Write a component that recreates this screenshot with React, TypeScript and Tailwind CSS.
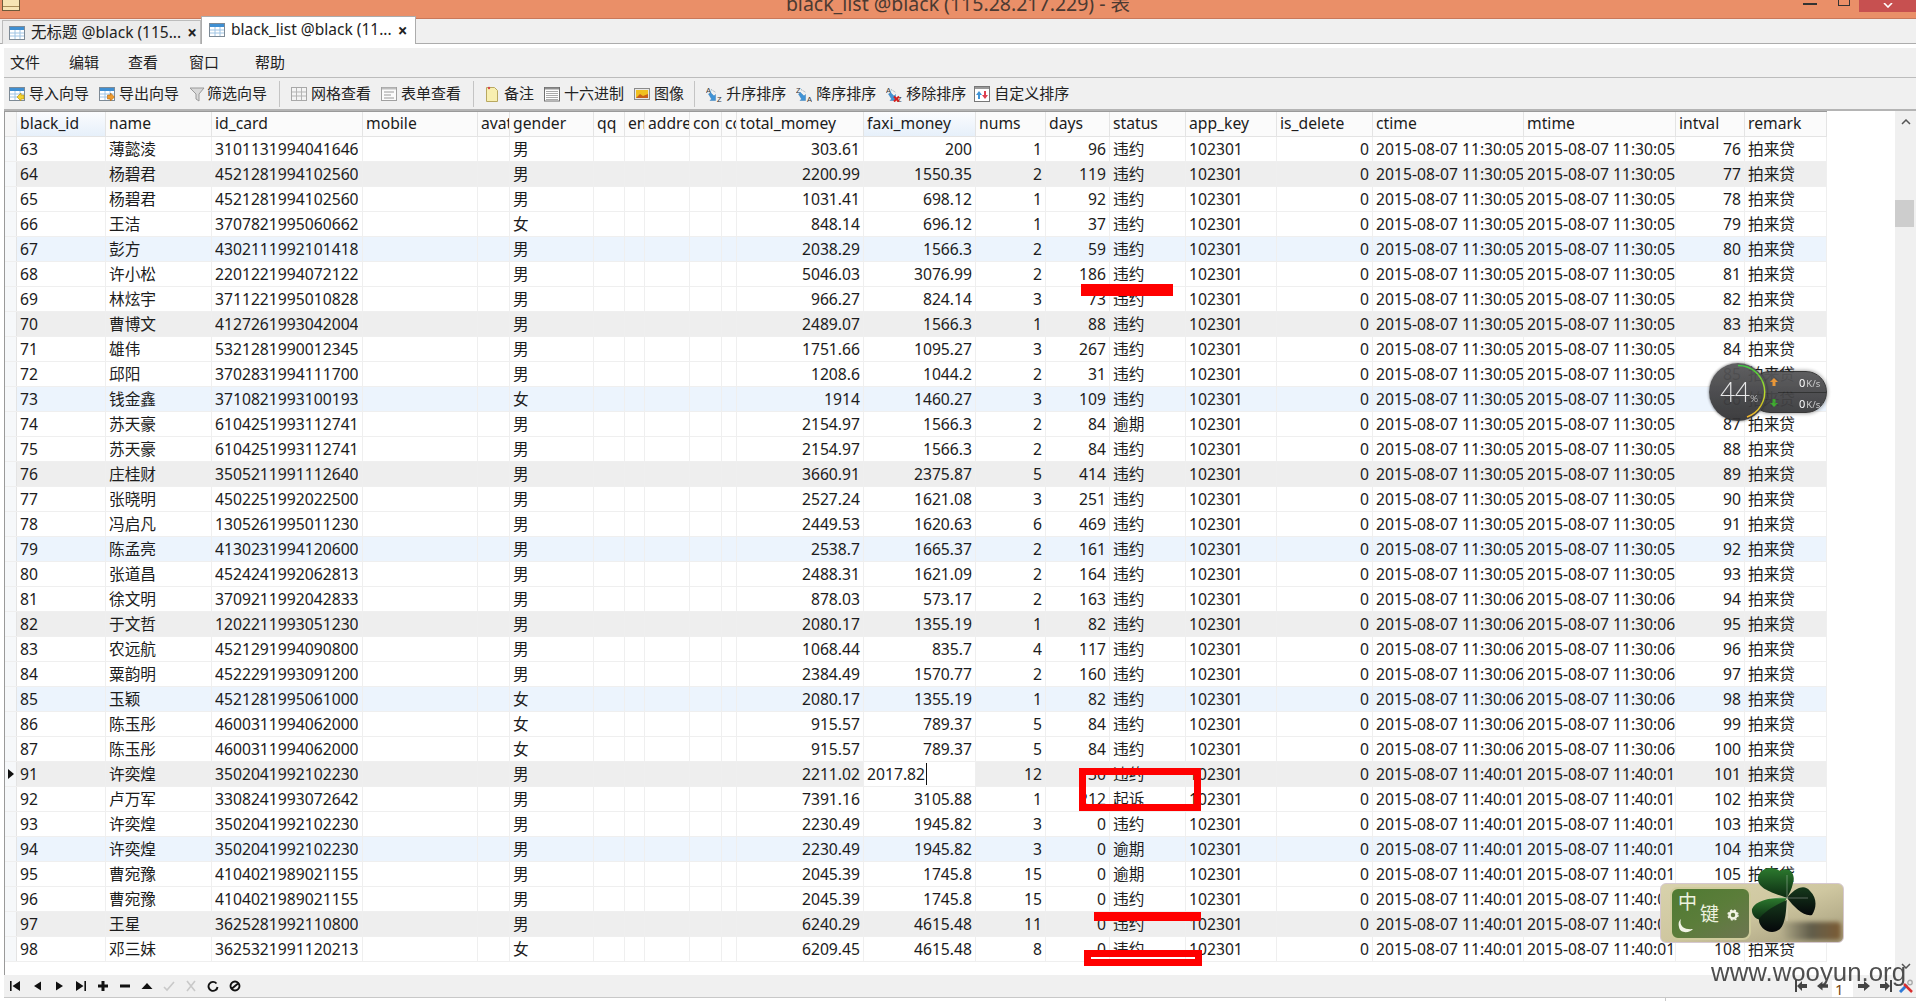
import type { ReactNode } from 'react';

const baseFont = "font-['Noto_Sans','Noto_Sans_CJK_SC',sans-serif]";

const colClass =
  'grid grid-cols-[12px_89px_106px_151px_115px_32px_84px_31px_20px_45px_32px_15px_127px_112px_70px_64px_76px_91px_96px_151px_152px_69px_82px]';

const headers = [
  'black_id', 'name', 'id_card', 'mobile', 'avat', 'gender', 'qq', 'en', 'addre', 'con', 'co',
  'total_momey', 'faxi_money', 'nums', 'days', 'status', 'app_key', 'is_delete', 'ctime', 'mtime', 'intval', 'remark',
];

type Row = [number, string, string, string, string, string, number, number, string, number, string];

// id, name, id_card, gender, total, faxi, nums, days, status, intval, time
const rows: Row[] = [
  [63, '薄懿淩', '31011319940416467', '男', '303.61', '200', 1, 96, '违约', 76, '11:30:05'],
  [64, '杨碧君', '45212819941025607', '男', '2200.99', '1550.35', 2, 119, '违约', 77, '11:30:05'],
  [65, '杨碧君', '45212819941025607', '男', '1031.41', '698.12', 1, 92, '违约', 78, '11:30:05'],
  [66, '王洁', '37078219950606621', '女', '848.14', '696.12', 1, 37, '违约', 79, '11:30:05'],
  [67, '彭方', '43021119921014181', '男', '2038.29', '1566.3', 2, 59, '违约', 80, '11:30:05'],
  [68, '许小松', '22012219940721221', '男', '5046.03', '3076.99', 2, 186, '违约', 81, '11:30:05'],
  [69, '林炫宇', '37112219950108281', '男', '966.27', '824.14', 3, 73, '违约', 82, '11:30:05'],
  [70, '曹博文', '41272619930420041', '男', '2489.07', '1566.3', 1, 88, '违约', 83, '11:30:05'],
  [71, '雄伟', '53212819900123451', '男', '1751.66', '1095.27', 3, 267, '违约', 84, '11:30:05'],
  [72, '邱阳', '37028319941117001', '男', '1208.6', '1044.2', 2, 31, '违约', 85, '11:30:05'],
  [73, '钱金鑫', '37108219931001931', '女', '1914', '1460.27', 3, 109, '违约', 86, '11:30:05'],
  [74, '苏天豪', '61042519931127411', '男', '2154.97', '1566.3', 2, 84, '逾期', 87, '11:30:05'],
  [75, '苏天豪', '61042519931127411', '男', '2154.97', '1566.3', 2, 84, '违约', 88, '11:30:05'],
  [76, '庄桂财', '35052119911126401', '男', '3660.91', '2375.87', 5, 414, '违约', 89, '11:30:05'],
  [77, '张晓明', '45022519920225001', '男', '2527.24', '1621.08', 3, 251, '违约', 90, '11:30:05'],
  [78, '冯启凡', '13052619950112301', '男', '2449.53', '1620.63', 6, 469, '违约', 91, '11:30:05'],
  [79, '陈孟亮', '41302319941206001', '男', '2538.7', '1665.37', 2, 161, '违约', 92, '11:30:05'],
  [80, '张道昌', '45242419920628131', '男', '2488.31', '1621.09', 2, 164, '违约', 93, '11:30:05'],
  [81, '徐文明', '37092119920428331', '男', '878.03', '573.17', 2, 163, '违约', 94, '11:30:06'],
  [82, '于文哲', '12022119930512301', '男', '2080.17', '1355.19', 1, 82, '违约', 95, '11:30:06'],
  [83, '农远航', '45212919940908001', '男', '1068.44', '835.7', 4, 117, '违约', 96, '11:30:06'],
  [84, '粟韵明', '45222919930912001', '男', '2384.49', '1570.77', 2, 160, '违约', 97, '11:30:06'],
  [85, '玉颖', '45212819950610001', '女', '2080.17', '1355.19', 1, 82, '违约', 98, '11:30:06'],
  [86, '陈玉彤', '46003119940620001', '女', '915.57', '789.37', 5, 84, '违约', 99, '11:30:06'],
  [87, '陈玉彤', '46003119940620001', '女', '915.57', '789.37', 5, 84, '违约', 100, '11:30:06'],
  [91, '许奕煌', '35020419921022307', '男', '2211.02', '2017.82', 12, 30, '违约', 101, '11:40:01'],
  [92, '卢万军', '33082419930726427', '男', '7391.16', '3105.88', 1, 212, '起诉', 102, '11:40:01'],
  [93, '许奕煌', '35020419921022307', '男', '2230.49', '1945.82', 3, 0, '违约', 103, '11:40:01'],
  [94, '许奕煌', '35020419921022307', '男', '2230.49', '1945.82', 3, 0, '逾期', 104, '11:40:01'],
  [95, '曹宛豫', '41040219890211552', '男', '2045.39', '1745.8', 15, 0, '逾期', 105, '11:40:01'],
  [96, '曹宛豫', '41040219890211552', '男', '2045.39', '1745.8', 15, 0, '违约', 106, '11:40:01'],
  [97, '王星', '36252819921108002', '男', '6240.29', '4615.48', 11, 0, '违约', 107, '11:40:01'],
  [98, '邓三妹', '36253219911202132', '女', '6209.45', '4615.48', 8, 0, '违约', 108, '11:40:01'],
];

const cellBase = 'h-full overflow-hidden whitespace-nowrap border-r border-[#efefef] leading-[24px]';
const L = `${cellBase} pl-[3px]`;
const R = `${cellBase} pr-[3px] text-right`;

function TableIcon({ badge }: { badge?: 'in' | 'out' }) {
  return (
    <svg viewBox="0 0 16 16" className="h-4 w-4 shrink-0">
      <rect x="0.5" y="1.5" width="15" height="13" fill="#fff" stroke="#7d8a96" />
      <rect x="1" y="2" width="14" height="3" fill="#3f8fd2" />
      <path d="M1 8h14M1 11h14M6 5v9M11 5v9" stroke="#9fc4e4" />
      {badge === 'in' && <path d="M8 11l4-4v2h3v4h-3v2z" fill="#f4d22e" stroke="#b08a10" strokeWidth="0.6" />}
      {badge === 'out' && <path d="M15.5 11l-4-4v2h-3v4h3v2z" fill="#f09a2a" stroke="#b0640f" strokeWidth="0.6" />}
    </svg>
  );
}

function Funnel() {
  return (
    <svg viewBox="0 0 16 16" className="h-4 w-4 shrink-0">
      <path d="M1 2h14l-5 6v7l-3-2V8z" fill="#d9d9d9" stroke="#9a9a9a" />
    </svg>
  );
}

function GridIcon() {
  return (
    <svg viewBox="0 0 16 16" className="h-4 w-4 shrink-0">
      <rect x="0.5" y="1.5" width="15" height="13" fill="#f4f4f4" stroke="#a8a8a8" />
      <path d="M1 6h14M1 10h14M5.500 2v12M10.500 2v12" stroke="#b5b5b5" />
    </svg>
  );
}

function FormIcon() {
  return (
    <svg viewBox="0 0 16 16" className="h-4 w-4 shrink-0">
      <rect x="0.5" y="1.5" width="15" height="13" fill="#fbfbfb" stroke="#a0a0a0" />
      <path d="M1 2.500h14" stroke="#bdbdbd" strokeWidth="2" />
      <path d="M3 6h10M3 9h7M3 12h10" stroke="#9a9a9a" />
    </svg>
  );
}

function NoteIcon() {
  return (
    <svg viewBox="0 0 16 16" className="h-4 w-4 shrink-0">
      <path d="M2.500 1.500h8l3 3v11h-11z" fill="#f8efb0" stroke="#b8a860" />
      <circle cx="5" cy="2" r="1.2" fill="#d8464a" />
    </svg>
  );
}

function HexIcon() {
  return (
    <svg viewBox="0 0 16 16" className="h-4 w-4 shrink-0">
      <rect x="0.5" y="1.5" width="15" height="13.5" fill="#fff" stroke="#6f6f6f" />
      <path d="M1 2.500h14" stroke="#8f8f8f" strokeWidth="2" />
      <path d="M2.500 5.500h11M2.500 7.500h11M2.500 9.500h11M2.500 11.500h11M2.500 13.500h11" stroke="#555" strokeDasharray="1 1" />
    </svg>
  );
}

function ImageIcon() {
  return (
    <svg viewBox="0 0 16 16" className="h-4 w-4 shrink-0">
      <rect x="0.5" y="2.5" width="15" height="11" fill="#e8e8e8" stroke="#8a8a8a" />
      <rect x="2" y="4" width="12" height="8" fill="#f0c020" />
      <path d="M2 12l4-4 3 2 5-2v4z" fill="#c8601a" />
    </svg>
  );
}

function SortIcon({ top, bottom, remove }: { top: string; bottom: string; remove?: boolean }) {
  return (
    <svg viewBox="0 0 16 16" className="h-4 w-4 shrink-0">
      <text x="0" y="6.5" fontSize="7.5" fill="#333" fontFamily="Liberation Sans, sans-serif">{top}</text>
      <text x="11" y="15.5" fontSize="7.5" fill="#333" fontFamily="Liberation Sans, sans-serif">{bottom}</text>
      <path d="M5 3.500l5 3" stroke="#8a9aa8" strokeDasharray="1 1" />
      <path d="M2.500 8l2-1.500 3.500 3.500 1.500-1.500v6H4l1.500-1.500z" fill="#3f93d6" stroke="#2a72b0" strokeWidth="0.4" />
      {remove && <path d="M8 10.500l5 5M13 10.500l-5 5" stroke="#d42020" strokeWidth="2" />}
    </svg>
  );
}

function CustomSortIcon() {
  return (
    <svg viewBox="0 0 16 16" className="h-4 w-4 shrink-0">
      <rect x="0.5" y="0.5" width="15" height="15" fill="#fff" stroke="#777" />
      <path d="M1 2h14" stroke="#999" strokeWidth="2" />
      <path d="M5 5l3 4H6v4H4V9H2z" fill="#3f93d6" />
      <path d="M11 13l-3-4h2V5h2v4h2z" fill="#dd4050" />
    </svg>
  );
}

type ToolItem = { icon: ReactNode; label: string; cls: string; sep?: string };

const tools: ToolItem[] = [
  { icon: <TableIcon badge="in" />, label: '导入向导', cls: 'gap-[4px]' },
  { icon: <TableIcon badge="out" />, label: '导出向导', cls: 'gap-[4px]' },
  { icon: <Funnel />, label: '筛选向导', cls: 'gap-[2px]', sep: 'ml-[2px] mr-[1px]' },
  { icon: <GridIcon />, label: '网格查看', cls: 'gap-[4px]' },
  { icon: <FormIcon />, label: '表单查看', cls: 'gap-[4px]', sep: 'ml-[2px]' },
  { icon: <NoteIcon />, label: '备注', cls: 'gap-[4px]' },
  { icon: <HexIcon />, label: '十六进制', cls: 'gap-[4px]' },
  { icon: <ImageIcon />, label: '图像', cls: 'gap-[4px]', sep: 'mr-[1px]' },
  { icon: <SortIcon top="A" bottom="Z" />, label: '升序排序', cls: 'gap-[4px]' },
  { icon: <SortIcon top="Z" bottom="A" />, label: '降序排序', cls: 'gap-[4px]' },
  { icon: <SortIcon top="A" bottom="Z" remove />, label: '移除排序', cls: 'gap-[4px]' },
  { icon: <CustomSortIcon />, label: '自定义排序', cls: '-ml-[2px] gap-[4px]' },
];

const navPaths = [
  <path key="first" d="M1 1h1.600v10H1zM11 1v10L3.500 6z" />,
  <path key="prev" d="M10 1.500v9L3 6z" />,
  <path key="next" d="M3 1.500v9L10 6z" />,
  <path key="last" d="M1 1v10l7.500-5zM9.400 1H11v10H9.400z" />,
  <path key="plus" d="M4.500 1h3v3.500H11v3H7.500V11h-3V7.500H1v-3h3.500z" />,
  <path key="minus" d="M1 4.500h10v3H1z" />,
  <path key="up" d="M6 3l5.500 6H.5z" />,
  <path key="check" d="M1 7l3 3 7-8" fill="none" stroke="#c9c9c9" strokeWidth="1.6" />,
  <path key="cross" d="M2 1l8 10M10 1L2 11" fill="none" stroke="#c9c9c9" strokeWidth="1.6" />,
  <path key="refresh" d="M9.500 3.500A4.500 4.500 0 1 0 10.500 7" fill="none" stroke="#111" strokeWidth="1.9" />,
  <path
    key="stop"
    d="M6 1.500a4.500 4.500 0 1 0 0 9a4.500 4.500 0 1 0 0-9zM3 8.500l6-5"
    fill="none"
    stroke="#111"
    strokeWidth="1.9"
  />,
];

function TitleBar() {
  return (
    <div className="grid h-[19px] shrink-0 grid-cols-[1fr_auto_1fr] overflow-hidden border-b border-[#c9785a] bg-[#ea8f68]">
      <div>
        <svg viewBox="0 0 18 11" className="ml-[2px] h-[11px] w-[18px]">
          <rect x="0.5" y="-3" width="17" height="13.5" fill="#f6e4b4" stroke="#6e5a3a" />
          <path d="M1 6.500h16" stroke="#a88c58" />
        </svg>
      </div>
      <div className="-mt-[9px] whitespace-nowrap text-[19.5px] leading-[26px] text-[#4c3a32]">
        black_list @black (115.28.217.229) - 表
      </div>
      <div className="flex justify-end">
        <div className="mt-[3px] h-[2px] w-[14px] bg-[#333]" />
        <div className="ml-[21px] h-[6px] w-[12px] border-x-[1.5px] border-b-[1.5px] border-[#333]" />
        <div className="ml-[9px] flex h-[12px] w-[57px] items-end justify-center bg-[#c75050]">
          <svg viewBox="0 0 10 5" className="mb-[4px] h-[5px] w-[10px]">
            <path d="M1 0l4 4 4-4" fill="none" stroke="#fff" strokeWidth="1.6" />
          </svg>
        </div>
      </div>
    </div>
  );
}

function Tabs() {
  return (
    <div className="flex h-[25px] shrink-0 border-b border-[#acacac] bg-[#f0f0f0] pl-[2px] text-[15.5px] text-[#222]">
      <div className="mt-[1px] flex h-[24px] w-[199px] items-center border border-b-0 border-[#bcbcbc] bg-[#ececec] pl-[6px]">
        <TableIcon />
        <span className="ml-[6px] whitespace-nowrap">无标题 @black (115...</span>
        <span className="ml-[6px] text-[17px] font-bold leading-none text-[#222]">×</span>
      </div>
      <div className="relative -mt-[3px] flex h-[28px] w-[215px] items-center border border-b-0 border-[#acacac] bg-white pb-[1px] pl-[7px]">
        <TableIcon />
        <span className="ml-[6px] whitespace-nowrap">black_list @black (11...</span>
        <span className="ml-[6px] text-[17px] font-bold leading-none text-[#222]">×</span>
      </div>
    </div>
  );
}

function MenuBar() {
  return (
    <div className="ml-[4px] mt-[4px] flex h-[30px] shrink-0 items-center border-b border-[#bcbcbc] bg-[#f0f0f0] pl-[6px] text-[15px] text-[#222]">
      <span>文件</span>
      <span className="ml-[29px]">编辑</span>
      <span className="ml-[29px]">查看</span>
      <span className="ml-[31px]">窗口</span>
      <span className="ml-[36px]">帮助</span>
    </div>
  );
}

function Toolbar() {
  return (
    <div className="ml-[4px] flex h-[33px] shrink-0 items-center gap-[10px] border-b-2 border-[#b4b4b4] bg-[#f0f0f0] pl-[5px] text-[15px] text-[#222]">
      {tools.map(t => (
        <div key={t.label} className="contents">
          <div className={`flex items-center whitespace-nowrap ${t.cls}`}>
            {t.icon}
            <span>{t.label}</span>
          </div>
          {t.sep && <div className={`h-[26px] w-px bg-[#c4c4c4] ${t.sep}`} />}
        </div>
      ))}
    </div>
  );
}

function HeaderRow() {
  return (
    <div className={`${colClass} h-[26px] w-max border-b border-[#e4e4e4] border-t border-t-[#9a9a9a] bg-[#fbfbfb]`}>
      <div className="border-r border-[#e4e4e4] bg-[#f6f6f6]" />
      {headers.map(h => {
        const active = h === 'black_id' || h === 'faxi_money';
        return (
          <div
            key={h}
            className={`h-full overflow-hidden whitespace-nowrap border-r border-[#e4e4e4] pl-[3px] leading-[23px] ${
              active ? 'bg-gradient-to-b from-[#fbfcfe] to-[#e6f0fa]' : ''
            }`}
          >
            {h}
          </div>
        );
      })}
    </div>
  );
}

function DataRow({ row, idx }: { row: Row; idx: number }) {
  const [id, name, card, gender, total, faxi, nums, days, status, intval, time] = row;
  const bg = idx % 6 === 1 ? 'bg-[#eeeeee]' : idx % 6 === 4 ? 'bg-[#ecf4fd]' : 'bg-white';
  const editing = id === 91;
  const stamp = `2015-08-07 ${time}`;
  return (
    <div className={`${colClass} h-[25px] w-max border-b border-[#efefef] ${bg}`}>
      <div className="flex h-full items-center justify-center border-r border-[#e4e4e4] bg-[#f6f8fa]">
        {editing && (
          <svg viewBox="0 0 6 10" className="h-[10px] w-[6px]">
            <path d="M0 0l6 5-6 5z" fill="#111" />
          </svg>
        )}
      </div>
      <div className={L}>{id}</div>
      <div className={L}>{name}</div>
      <div className={`${L} pr-[4px]`}>
        <div className="overflow-hidden">{card}</div>
      </div>
      <div className={L} />
      <div className={L} />
      <div className={L}>{gender}</div>
      <div className={L} />
      <div className={L} />
      <div className={L} />
      <div className={L} />
      <div className={L} />
      <div className={R}>{total}</div>
      {editing ? (
        <div className={`${L} bg-white`}>
          <span className="border-r border-[#111] pr-px">{faxi}</span>
        </div>
      ) : (
        <div className={R}>{faxi}</div>
      )}
      <div className={R}>{nums}</div>
      <div className={R}>{days}</div>
      <div className={L}>{status}</div>
      <div className={L}>102301</div>
      <div className={R}>0</div>
      <div className={L}>{stamp}</div>
      <div className={L}>{stamp}</div>
      <div className={R}>{intval}</div>
      <div className={L}>拍来贷</div>
    </div>
  );
}

function Scrollbar() {
  return (
    <div className="flex w-[21px] shrink-0 flex-col items-center bg-[#f0f0f0] pt-[8px]">
      <svg viewBox="0 0 10 6" className="h-[6px] w-[10px]">
        <path d="M1 5l4-4 4 4" fill="none" stroke="#555" strokeWidth="1.5" />
      </svg>
      <div className="ml-[-2px] mt-[75px] h-[27px] w-[19px] bg-[#cdcdcd]" />
      <svg viewBox="0 0 10 6" className="mt-auto mb-[6px] h-[6px] w-[10px]">
        <path d="M1 1l4 4 4-4" fill="none" stroke="#555" strokeWidth="1.5" />
      </svg>
    </div>
  );
}

function BottomBar() {
  return (
    <div className="ml-[4px] flex h-[23px] shrink-0 items-center justify-between border-b border-[#c8c8c8] bg-[#f0f0f0]">
      <div className="flex items-center">
        {navPaths.map(p => (
          <div key={p.key} className="flex w-[22px] items-center justify-center">
            <svg viewBox="0 0 12 12" className="h-[12px] w-[12px]" fill="#111">
              {p}
            </svg>
          </div>
        ))}
      </div>
      <div className="mr-[3px] flex h-full items-center">
        <svg viewBox="0 0 12 12" className="h-[12px] w-[12px]" fill="#444">
          <path d="M0 0h2v12H0zM2 6l5-5v3h5v4H7v3z" />
        </svg>
        <svg viewBox="0 0 12 12" className="ml-[10px] h-[12px] w-[11px]" fill="#444">
          <path d="M0 6l6-5v3h6v4H6v3z" />
        </svg>
        <div className="ml-[4px] mt-[5px] h-[17px] w-[21px] bg-white pl-[3px] text-[15px] leading-[18px] text-[#7a4a10]">1</div>
        <svg viewBox="0 0 12 12" className="ml-[5px] h-[12px] w-[12px]" fill="#444">
          <path d="M12 6L6 1v3H0v4h6v3z" />
        </svg>
        <svg viewBox="0 0 12 12" className="ml-[10px] h-[12px] w-[12px]" fill="#444">
          <path d="M12 0h-2v12h2zM10 6L5 1v3H0v4h5v3z" />
        </svg>
        <svg viewBox="0 0 14 14" className="ml-[7px] h-[14px] w-[14px]">
          <path d="M1 13L8 6" stroke="#2f7bd8" strokeWidth="3" />
          <path d="M13 13L5 5" stroke="#d83030" strokeWidth="2.5" />
          <circle cx="11" cy="3.500" r="2.200" fill="none" stroke="#aaa" strokeWidth="1.4" />
        </svg>
      </div>
    </div>
  );
}

function SpeedWidget() {
  return (
    <div className="absolute left-[1709px] top-[363px] h-[58px] w-[118px] opacity-95">
      <div className="absolute left-[40px] top-[8px] h-[42px] w-[78px] rounded-full border border-[#2d2d2d] bg-gradient-to-b from-[#565658] to-[#3b3b3d] shadow-[0_0_4px_rgba(0,0,0,0.5)]">
        <div className="absolute left-[28px] right-0 top-[20px] h-px bg-[#2a2a2a]" />
        <div className="absolute left-[49px] top-[3px] flex items-baseline whitespace-nowrap text-[9.5px] leading-[15px] text-[#c9c9c9]">
          <span className="text-[11px] text-white">0</span>
          <span className="ml-[1px]">K/s</span>
        </div>
        <div className="absolute left-[49px] top-[24px] flex items-baseline whitespace-nowrap text-[9.5px] leading-[15px] text-[#c9c9c9]">
          <span className="text-[11px] text-white">0</span>
          <span className="ml-[1px]">K/s</span>
        </div>
        <svg viewBox="0 0 8 8" className="absolute left-[20px] top-[6px] h-[8px] w-[8px]">
          <path d="M4 0l4 4H5.500v4h-3V4H0z" fill="#e8922e" />
        </svg>
        <svg viewBox="0 0 8 8" className="absolute left-[20px] top-[27px] h-[8px] w-[8px]">
          <path d="M4 8l4-4H5.500V0h-3v4H0z" fill="#3aa82a" />
        </svg>
      </div>
      <div className="absolute left-0 top-0 h-[58px] w-[58px] rounded-full bg-gradient-to-b from-[#58585a] to-[#333335] shadow-[0_0_3px_rgba(0,0,0,0.6)]" />
      <svg viewBox="0 0 58 58" className="absolute left-0 top-0 h-[58px] w-[58px]">
        <defs>
          <linearGradient id="arc" x1="0" y1="0" x2="0" y2="1">
            <stop offset="0" stopColor="#35c83a" />
            <stop offset="0.55" stopColor="#b8d820" />
            <stop offset="1" stopColor="#f0b020" />
          </linearGradient>
        </defs>
        <path d="M29 2.500A26.500 26.500 0 0 1 38 54" fill="none" stroke="url(#arc)" strokeWidth="1.5" />
      </svg>
      <div className="absolute left-[11px] top-[12px] flex items-baseline font-['Lato',sans-serif] font-light leading-[34px] text-[#e8e8e8]">
        <span className="text-[27px] tracking-[-1px]">44</span>
        <span className="ml-[1px] text-[10px]">%</span>
      </div>
    </div>
  );
}

function CloverWidget() {
  return (
    <div className="absolute left-[1660px] top-[867px] h-[76px] w-[184px]">
      <div className="absolute inset-x-0 bottom-0 h-[60px] overflow-hidden rounded-[6px] border border-[#d5c8d0] bg-gradient-to-br from-[#d8d2ac] via-[#cfc7a0] to-[#a49c7c] p-[3px]">
        <div className="absolute left-[9px] top-[3px] h-[53px] w-[81px] rounded-[8px] border-2 border-[#cfcb9c] bg-gradient-to-br from-[#4f7a32] via-[#5b7d3a] to-[#6d7550]" />
        <div className="absolute bottom-[2px] right-[2px] h-[18px] w-[60px] rounded-[4px] bg-gradient-to-r from-[#b5ae8c] via-[#615d4a] to-[#7c5c34] blur-[2px]" />
      </div>
      <svg viewBox="0 0 94 76" className="absolute left-[90px] top-0 h-[76px] w-[94px]">
        <defs>
          <linearGradient id="leaf" x1="0" y1="0" x2="0" y2="1">
            <stop offset="0" stopColor="#2c7a2e" />
            <stop offset="1" stopColor="#0c2a12" />
          </linearGradient>
          <linearGradient id="leafDark" x1="0" y1="0" x2="0" y2="1">
            <stop offset="0" stopColor="#163a1c" />
            <stop offset="1" stopColor="#05070a" />
          </linearGradient>
        </defs>
        <path d="M37 31C24 26 6 22 8 10C10 1 22-2 30 4C40-2 46 8 43 16C42 22 39 27 37 31Z" fill="url(#leaf)" />
        <path d="M37 31C26 30 6 32 2 42C1 50 10 57 19 50C25 46 33 38 37 31Z" fill="url(#leaf)" />
        <path d="M37 33C30 36 14 44 9 52C8 60 20 70 30 62C36 56 36 42 37 33Z" fill="url(#leafDark)" />
        <path d="M37 31C44 22 54 16 60 24C68 32 66 42 62 48C54 50 44 40 37 31Z" fill="url(#leafDark)" />
        <path d="M37 8V54M20 31H58" stroke="#fff" strokeOpacity="0.45" strokeWidth="0.7" />
      </svg>
      <span className="absolute left-[18px] top-[25px] text-[19px] leading-[20px] text-[#eef2e0]">中</span>
      <span className="absolute left-[40px] top-[37px] text-[19px] leading-[20px] text-[#eef2e0]">键</span>
      <svg viewBox="0 0 12 12" className="absolute left-[67px] top-[42px] h-[12px] w-[12px]">
        <circle cx="6" cy="6" r="3.500" fill="none" stroke="#f2f4e6" strokeWidth="2.5" />
        <circle cx="6" cy="6" r="5" fill="none" stroke="#f2f4e6" strokeWidth="1.4" strokeDasharray="2 2" />
      </svg>
      <svg viewBox="0 0 16 14" className="absolute left-[18px] top-[52px] h-[14px] w-[16px]">
        <path d="M3 0C1 6 5 11 15 10C12 14 2 15 1 8C0 4 1 2 3 0Z" fill="#f2f4e6" />
      </svg>
    </div>
  );
}

export default function App() {
  return (
    <div className={`relative flex h-[1001px] w-[1916px] flex-col overflow-hidden bg-white text-[#1c1c1c] ${baseFont}`}>
      <TitleBar />
      <Tabs />
      <MenuBar />
      <Toolbar />
      <div className="ml-[4px] flex min-h-0 flex-1 border-l border-[#9a9a9a] text-[15.7px]">
        <div className="min-w-0 flex-1">
          <HeaderRow />
          {rows.map((r, i) => (
            <DataRow key={r[0]} row={r} idx={i} />
          ))}
        </div>
        <Scrollbar />
      </div>
      <BottomBar />
      <div className="flex h-[3px] shrink-0 bg-white">
        <div className="ml-[1665px] h-full w-px bg-[#c8c8c8]" />
      </div>

      {/* 盖在表格上的标记和悬浮窗 */}
      <div className="absolute left-[1081px] top-[284px] h-[12px] w-[92px] bg-[#ff0000]" />
      <div className="absolute left-[1079px] top-[768px] h-[43px] w-[122px] border-[7px] border-[#ff0000]" />
      <div className="absolute left-[1094px] top-[912px] h-[9px] w-[107px] bg-[#ff0000]" />
      <div className="absolute left-[1084px] top-[950px] h-[16px] w-[118px] border-[7px] border-[#ff0000]" />
      <SpeedWidget />
      <CloverWidget />
      <div className="absolute left-[1711px] top-[957px] font-['Liberation_Sans',sans-serif] text-[25.8px] leading-[30px] text-[#3c3c3c] opacity-90">
        www.wooyun.org
      </div>
    </div>
  );
}
